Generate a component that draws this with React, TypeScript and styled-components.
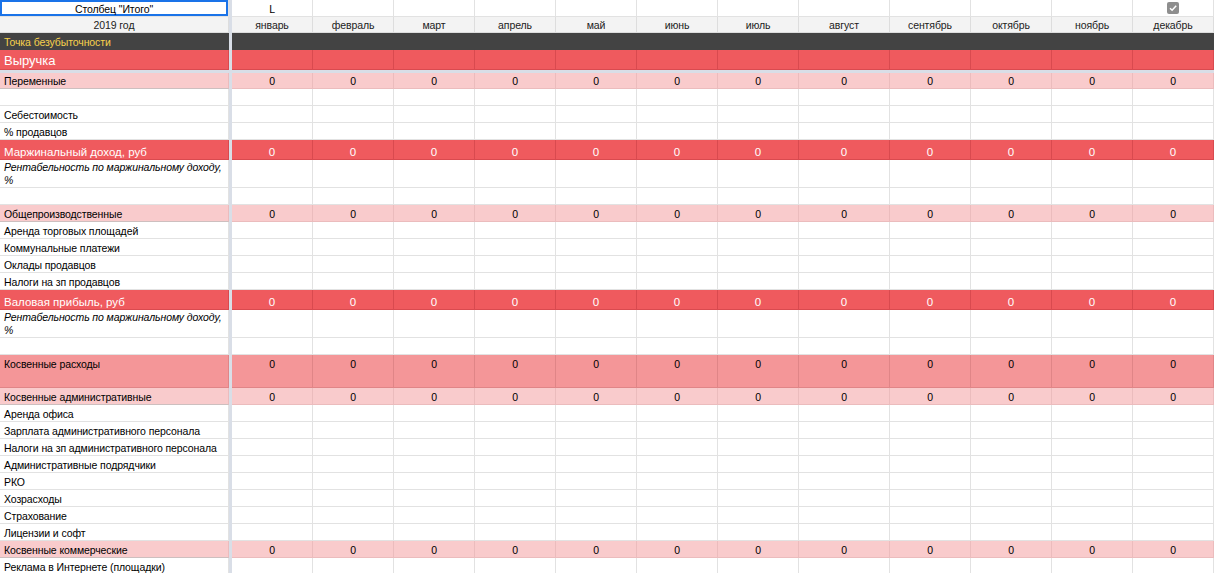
import React from 'react';
import styled, { createGlobalStyle } from 'styled-components';

type Tone = 'plain' | 'head' | 'dark' | 'red' | 'pink' | 'salmon';

const palette: Record<Tone, { bg: string; line: string; color: string }> = {
  plain: { bg: '#ffffff', line: '#e2e2e2', color: '#000000' },
  head: { bg: '#f3f3f3', line: '#dddddd', color: '#222222' },
  dark: { bg: '#434343', line: '#434343', color: '#ffffff' },
  red: { bg: '#ef5a5e', line: '#d94a4f', color: '#ffffff' },
  pink: { bg: '#f9cbcc', line: '#ebbcbd', color: '#000000' },
  salmon: { bg: '#f49698', line: '#e08587', color: '#000000' },
};

const MONTHS = [
  'январь',
  'февраль',
  'март',
  'апрель',
  'май',
  'июнь',
  'июль',
  'август',
  'сентябрь',
  'октябрь',
  'ноябрь',
  'декабрь',
];

const GlobalStyle = createGlobalStyle`
  html, body {
    margin: 0;
    padding: 0;
    background: #fff;
    overflow: hidden;
  }
  body {
    font-family: 'Liberation Sans', Arial, sans-serif;
    -webkit-font-smoothing: antialiased;
  }
`;

const Sheet = styled.div`
  display: flex;
  flex-direction: column;
  width: 1214px;
`;

const Row = styled.div<{ $h: number }>`
  display: grid;
  grid-template-columns: 229px 3px repeat(7, 81px) 91px repeat(4, 81px);
  height: ${({ $h }) => $h}px;
`;

const FreezeBar = styled.div`
  height: 3px;
  background: #d9dee7;
`;

const Divider = styled.div`
  background: #d9dee7;
`;

const Cell = styled.div<{
  $tone: Tone;
  $center?: boolean;
  $top?: boolean;
  $size?: number;
  $bottom?: string;
}>`
  box-sizing: border-box;
  display: flex;
  align-items: ${({ $top }) => ($top ? 'flex-start' : 'flex-end')};
  justify-content: ${({ $center }) => ($center ? 'center' : 'flex-start')};
  padding: ${({ $top }) => ($top ? '2px 4px 0' : '0 4px 0')};
  background: ${({ $tone }) => palette[$tone].bg};
  color: ${({ $tone }) => palette[$tone].color};
  border-right: 1px solid ${({ $tone }) => palette[$tone].line};
  border-bottom: 1px solid ${({ $tone, $bottom }) => $bottom || palette[$tone].line};
  font-size: ${({ $size }) => $size || 10.5}px;
  letter-spacing: ${({ $size }) => ($size ? '0' : '-0.1px')};
  line-height: ${({ $size }) => ($size && $size > 12 ? 16 : 14)}px;
  white-space: nowrap;
  overflow: hidden;
`;

const SelectedCell = styled(Cell)`
  box-shadow: inset 0 0 0 2px #1a73e8;
  align-items: center;
  padding-top: 1px;
`;

const WrapLabel = styled.div`
  box-sizing: border-box;
  padding: 1px 4px 0;
  font-size: 10.5px;
  letter-spacing: -0.1px;
  line-height: 13px;
  font-style: italic;
  white-space: normal;
  color: #000;
  background: #fff;
  border-right: 1px solid #e2e2e2;
  border-bottom: 1px solid #e2e2e2;
  overflow: hidden;
`;

const YellowText = styled.span`
  color: #f7d14c;
`;

const CheckBox = styled.span`
  display: inline-flex;
  align-items: center;
  justify-content: center;
  width: 12px;
  height: 12px;
  margin-bottom: 2px;
  border-radius: 2px;
  background: #8e8e8e;
`;

type Line = {
  label: string;
  tone?: Tone;
  h?: number;
  zeros?: boolean;
  size?: number;
  italic?: boolean;
  top?: boolean;
};

const upper: Line[] = [
  { label: 'Точка безубыточности', tone: 'dark', h: 17 },
  { label: 'Выручка', tone: 'red', h: 20, size: 13 },
];

const lower: Line[] = [
  { label: 'Переменные', tone: 'pink', h: 16, zeros: true },
  { label: '' },
  { label: 'Себестоимость' },
  { label: '% продавцов' },
  { label: 'Маржинальный доход, руб', tone: 'red', h: 20, zeros: true, size: 11.5 },
  { label: 'Рентабельность по маржинальному доходу, %', italic: true, h: 28 },
  { label: '' },
  { label: 'Общепроизводственные', tone: 'pink', zeros: true },
  { label: 'Аренда торговых площадей' },
  { label: 'Коммунальные платежи' },
  { label: 'Оклады продавцов' },
  { label: 'Налоги на зп продавцов' },
  { label: 'Валовая прибыль, руб', tone: 'red', h: 20, zeros: true, size: 11.5 },
  { label: 'Рентабельность по маржинальному доходу, %', italic: true, h: 28 },
  { label: '' },
  { label: 'Косвенные расходы', tone: 'salmon', h: 33, zeros: true, top: true },
  { label: 'Косвенные административные', tone: 'pink', zeros: true },
  { label: 'Аренда офиса' },
  { label: 'Зарплата административного персонала' },
  { label: 'Налоги на зп административного персонала' },
  { label: 'Административные подрядчики' },
  { label: 'РКО' },
  { label: 'Хозрасходы' },
  { label: 'Страхование' },
  { label: 'Лицензии и софт' },
  { label: 'Косвенные коммерческие', tone: 'pink', zeros: true },
  { label: 'Реклама в Интернете (площадки)' },
];

const SheetRow = ({ line }: { line: Line }) => {
  const tone = line.tone || 'plain';
  return (
    <Row $h={line.h || 17}>
      {line.italic ? (
        <WrapLabel>{line.label}</WrapLabel>
      ) : (
        <Cell
          $tone={tone}
          $top={line.top}
          $size={line.size}
          $bottom={tone === 'pink' ? '#cdbfbf' : undefined}
        >
          {tone === 'dark' ? <YellowText>{line.label}</YellowText> : line.label}
        </Cell>
      )}
      <Divider />
      {MONTHS.map(m => (
        <Cell key={m} $tone={tone} $center $top={line.top} $size={line.size === 11.5 ? 11.5 : undefined}>
          {line.zeros ? '0' : ''}
        </Cell>
      ))}
    </Row>
  );
};

const App = () => (
  <>
    <GlobalStyle />
    <Sheet>
      <Row $h={17}>
        <SelectedCell $tone="plain" $center>
          Столбец "Итого"
        </SelectedCell>
        <Divider />
        {MONTHS.map((m, i) => (
          <Cell key={m} $tone="plain" $center>
            {i === 0 && 'L'}
            {i === 11 && (
              <CheckBox>
                <svg width="10" height="10" viewBox="0 0 10 10">
                  <path d="M2 5.2 L4.1 7.2 L8.2 2.8" stroke="#fff" strokeWidth="1.5" fill="none" />
                </svg>
              </CheckBox>
            )}
          </Cell>
        ))}
      </Row>
      <Row $h={16}>
        <Cell $tone="head" $center>
          2019 год
        </Cell>
        <Divider />
        {MONTHS.map(m => (
          <Cell key={m} $tone="head" $center>
            {m}
          </Cell>
        ))}
      </Row>
      {upper.map((line, i) => (
        <SheetRow key={`u${i}`} line={line} />
      ))}
      <FreezeBar />
      {lower.map((line, i) => (
        <SheetRow key={`l${i}`} line={line} />
      ))}
    </Sheet>
  </>
);

export default App;
